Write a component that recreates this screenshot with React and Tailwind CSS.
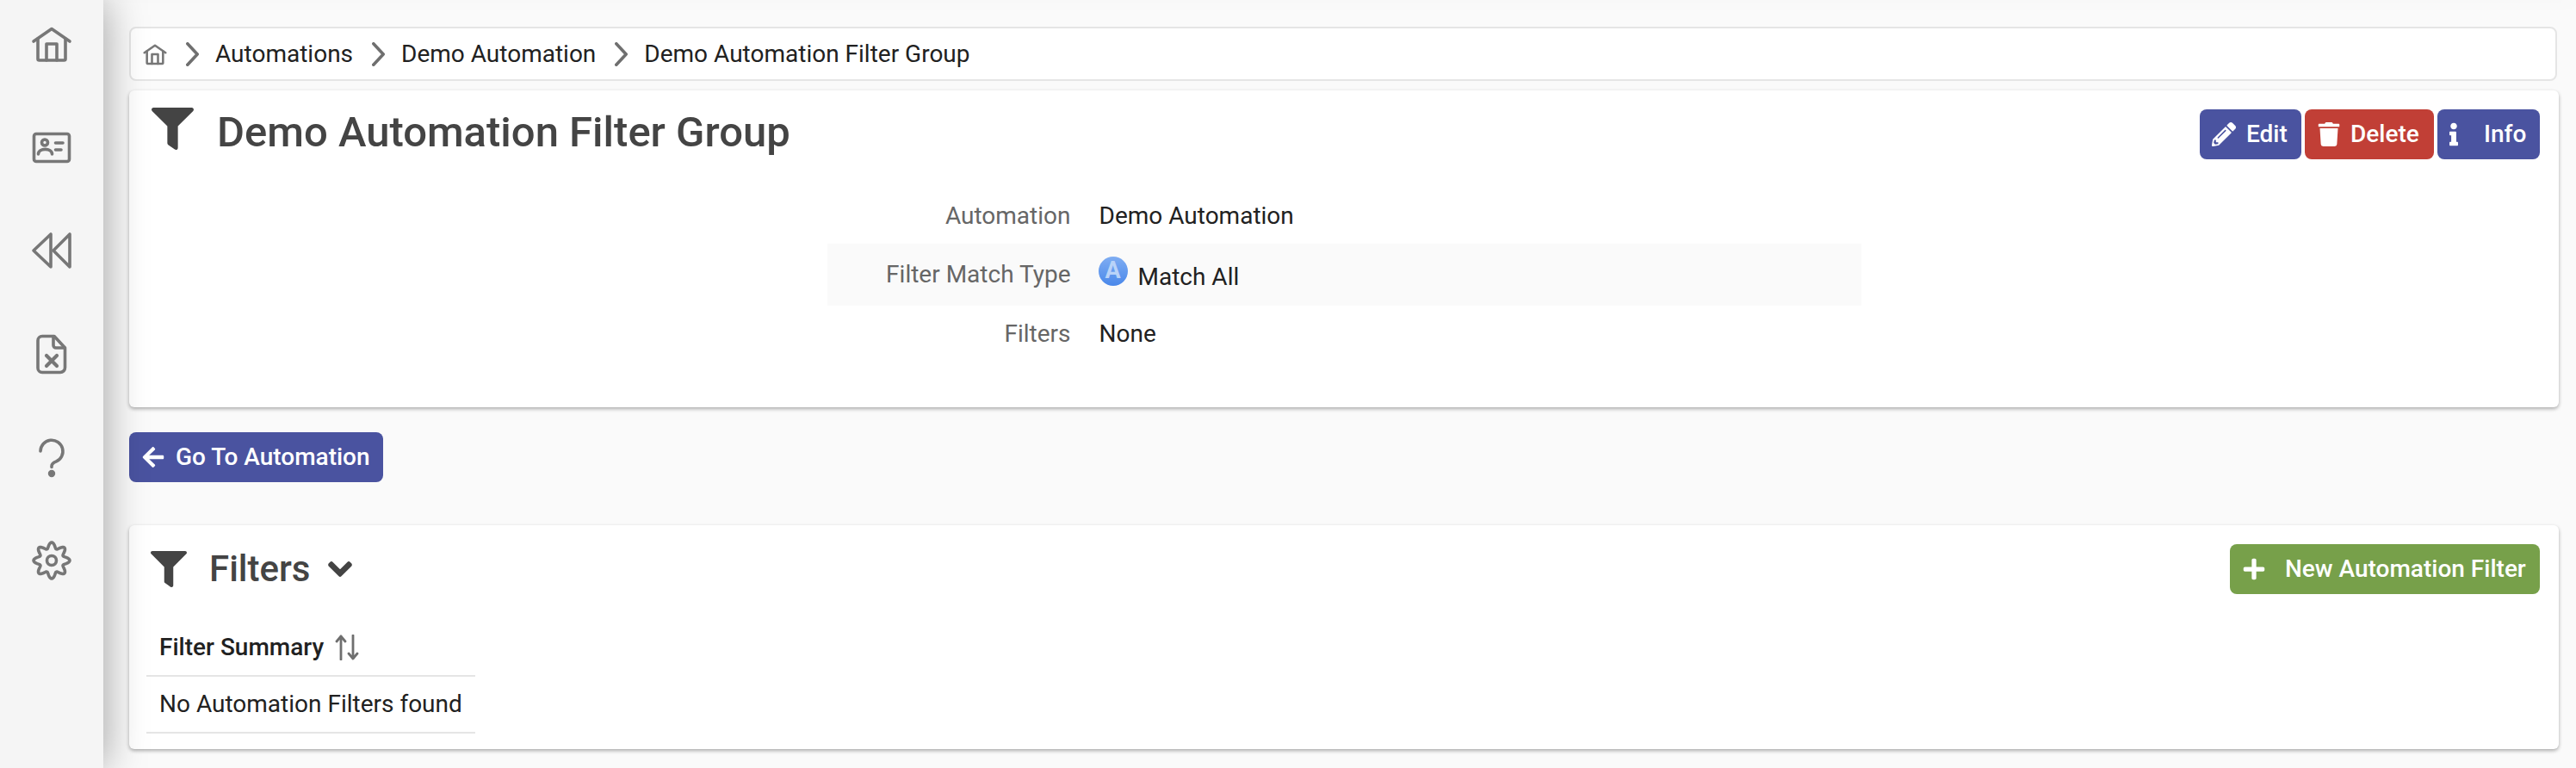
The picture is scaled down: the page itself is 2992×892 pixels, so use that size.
import React from "react";
import { FaFilter, FaPencilAlt, FaTrash, FaInfo, FaArrowLeft, FaPlus, FaChevronDown } from "react-icons/fa";

const gearPath = () => {
  const pts = [];
  for (let i = 0; i < 120; i++) {
    const a = (i / 120) * Math.PI * 2 - Math.PI / 2;
    const r = 17.6 + 3.4 * Math.cos(8 * (a + Math.PI / 2));
    pts.push(`${(24 + r * Math.cos(a)).toFixed(2)} ${(24 + r * Math.sin(a)).toFixed(2)}`);
  }
  return "M" + pts.join("L") + "Z";
};

const Icon = ({ children, size = 48, width = 3.6 }) => (
  <svg
    width={size}
    height={size}
    viewBox="0 0 48 48"
    fill="none"
    stroke="#777777"
    strokeWidth={width}
    strokeLinecap="round"
    strokeLinejoin="round"
  >
    {children}
  </svg>
);

const homeShape = (
  <>
    <path d="M3 21L24 6.5L45 21" />
    <path d="M8 18V41.5a1.5 1.5 0 0 0 1.5 1.5H38.5a1.5 1.5 0 0 0 1.5-1.5V18" />
    <path d="M18 43V24H30V43" />
  </>
);

const navIcons = [
  homeShape,
  <>
    <rect x="3.5" y="8.5" width="41" height="32" rx="2.5" />
    <circle cx="16" cy="18.5" r="3.5" />
    <path d="M8.5 32c0-7.5 16-7.5 16 0" />
    <path d="M28.5 19H37M28.5 27H35" />
  </>,
  <>
    <path d="M3 24L23 5V43Z" />
    <path d="M26 24L45 5V43Z" />
  </>,
  <>
    <path d="M13 3.5H27L39.5 17V40a5.5 5.5 0 0 1-5.5 5.5H13a5 5 0 0 1-5-5V8.5a5 5 0 0 1 5-5Z" />
    <path d="M26 4V14a3 3 0 0 0 3 3H39" />
    <path d="M18 26L30 38M30 26L18 38" strokeWidth="4.2" />
  </>,
  <>
    <path d="M11 17a13 13 0 1 1 18 12.2q-5 2-5 5.3v1" />
    <circle cx="24" cy="43" r="2.4" fill="#777777" />
  </>,
  <>
    <path d={gearPath()} />
    <circle cx="24" cy="24" r="5.5" />
  </>,
];

const Chevron = () => (
  <svg width="15" height="28" viewBox="0 0 15 28" fill="none" stroke="#6f6f6f" strokeWidth="3.6" strokeLinecap="round" strokeLinejoin="round">
    <path d="M1.8 1.8L13.2 14L1.8 26.2" />
  </svg>
);

const SortIcon = () => (
  <svg width="28" height="30" viewBox="0 0 28 30" fill="none" stroke="#6f6f6f" strokeWidth="2.8" strokeLinecap="round" strokeLinejoin="round">
    <path d="M7 29V2M2 8L7 2L12 8" />
    <path d="M21 1V28M16 22L21 28L26 22" />
  </svg>
);

const ActionButton = ({ color, gap, width, icon, children }) => (
  <button className={`flex h-[58px] items-center rounded-lg pl-[14px] text-[28px] font-medium leading-none text-white ${color} ${gap} ${width}`}>
    {icon}
    <span>{children}</span>
  </button>
);

const rowLabel = "w-[283px] text-right text-[28px] text-[#666666]";

const App = () => {
  return (
    <div className="flex h-screen w-full overflow-hidden bg-[#fafafa] font-[family-name:Roboto,sans-serif] text-[#212121]">
      <aside className="relative z-10 flex w-[120px] shrink-0 flex-col items-center gap-[72px] bg-[#f5f5f5] pt-[27px] shadow-[0_0_50px_rgba(0,0,0,0.38)]">
        {navIcons.map((shape, i) => (
          <Icon key={i}>{shape}</Icon>
        ))}
      </aside>

      <main className="relative min-w-0 flex-1 pl-[30px] pr-[20px] pt-[31px]">
        <div className="absolute inset-x-0 -top-px h-px shadow-[0_0_20px_rgba(0,0,0,0.2)]" />

        <nav className="mr-[2px] flex h-[63px] items-center rounded-lg border-2 border-[#e5e5e5] bg-white pl-[14px] text-[28px] leading-none">
          <Icon size={28} width={4.4}>{homeShape}</Icon>
          <span className="ml-[22px] mr-[19px]"><Chevron /></span>
          <span>Automations</span>
          <span className="ml-[22px] mr-[19px]"><Chevron /></span>
          <span>Demo Automation</span>
          <span className="ml-[22px] mr-[19px]"><Chevron /></span>
          <span>Demo Automation Filter Group</span>
        </nav>

        <section className="mt-[11px] h-[368px] rounded-md bg-white shadow-[0_2px_4px_rgba(0,0,0,0.32)]">
          <div className="flex items-start justify-between pl-[26px] pr-[22px] pt-[22px]">
            <div className="flex items-start gap-[27px]">
              <FaFilter className="-mt-[2px] text-[49px] text-[#444444]" />
              <h1 className="-mt-[2px] text-[49px] font-medium leading-[58px] text-[#444444]">Demo Automation Filter Group</h1>
            </div>
            <div className="flex gap-[4px]">
              <ActionButton color="bg-[#4a53a0]" gap="gap-[12px]" width="w-[118px]" icon={<FaPencilAlt className="text-[28px]" />}>Edit</ActionButton>
              <ActionButton color="bg-[#c13f36]" gap="gap-[11px]" width="w-[150px]" icon={<FaTrash className="text-[28px]" />}>Delete</ActionButton>
              <ActionButton color="bg-[#4a53a0]" gap="gap-[30px]" width="w-[119px]" icon={<FaInfo className="w-[10px] text-[28px]" />}>Info</ActionButton>
            </div>
          </div>

          <div className="mx-auto mt-[32px] w-[1201px]">
            <div className="flex h-[66px] items-center pt-[2px]">
              <div className={rowLabel}>Automation</div>
              <div className="ml-[33px] text-[28px]">Demo Automation</div>
            </div>
            <div className="flex h-[72px] items-center bg-[#fafafa]">
              <div className={rowLabel}>Filter Match Type</div>
              <div className="ml-[32px] flex items-start text-[28px]">
                <span className="-mt-[3px] flex h-[34px] w-[34px] items-center justify-center rounded-full bg-gradient-to-b from-[#7fadf2] to-[#4a88ea] text-[27px] font-bold leading-none text-[#b9d3f8]">A</span>
                <span className="ml-[12px] mt-[5px] leading-[32px]">Match All</span>
              </div>
            </div>
            <div className="flex h-[64px] items-center pt-[2px]">
              <div className={rowLabel}>Filters</div>
              <div className="ml-[33px] text-[28px]">None</div>
            </div>
          </div>
        </section>

        <button className="mt-[29px] flex h-[58px] w-[295px] items-center gap-[12px] rounded-lg bg-[#4a53a0] pl-[14px] text-[28px] font-medium leading-none text-white">
          <FaArrowLeft className="text-[28px]" />
          <span>Go To Automation</span>
        </button>

        <section className="mt-[50px] h-[260px] rounded-md bg-white shadow-[0_2px_4px_rgba(0,0,0,0.32)]">
          <div className="flex items-start justify-between pl-[25px] pr-[22px] pt-[22px]">
            <div className="flex h-[58px] items-center">
              <FaFilter className="text-[42px] text-[#444444]" />
              <h2 className="ml-[26px] text-[42px] font-medium leading-none text-[#444444]">Filters</h2>
              <FaChevronDown className="ml-[19px] text-[30px] text-[#444444]" stroke="currentColor" strokeWidth={36} />
            </div>
            <ActionButton color="bg-[#77a04a]" gap="gap-[22px]" width="w-[360px]" icon={<FaPlus className="text-[28px]" />}>New Automation Filter</ActionButton>
          </div>

          <div className="ml-[20px] mt-[32px] w-[382px] text-[28px]">
            <div className="flex h-[64px] items-center gap-[13px] border-b-2 border-[#e5e5e5] pb-[2px] pl-[15px] font-medium">
              <span>Filter Summary</span>
              <SortIcon />
            </div>
            <div className="flex h-[66px] items-center border-b-2 border-[#e5e5e5] pl-[15px]">No Automation Filters found</div>
          </div>
        </section>
      </main>
    </div>
  );
};

export default App;
